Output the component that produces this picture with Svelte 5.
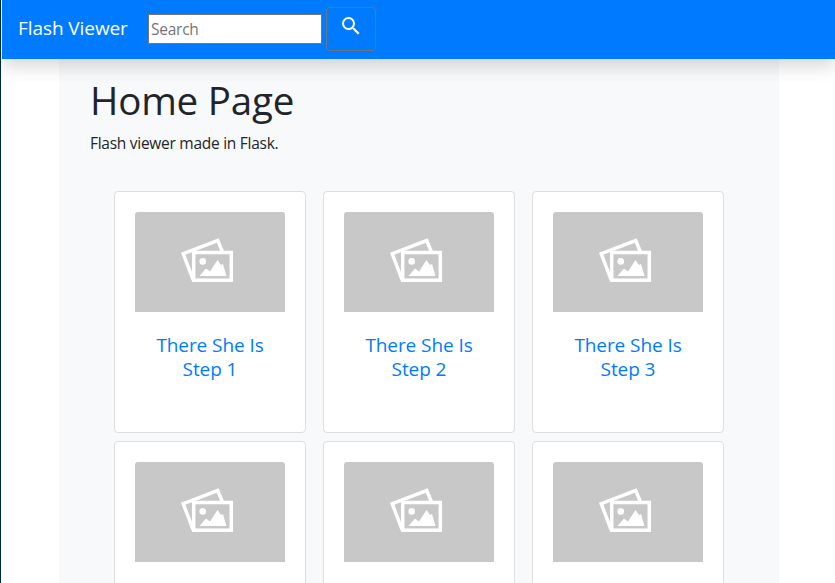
<script>
  const cards = [
    ['There She Is', 'Step 1'],
    ['There She Is', 'Step 2'],
    ['There She Is', 'Step 3'],
    [],
    [],
    [],
  ];
</script>

<div class="page">
  <nav>
    <a class="brand" href="#home">Flash Viewer</a>
    <form>
      <input type="text" placeholder="Search" aria-label="Search" />
      <button type="button" aria-label="Submit search">
        <svg width="24" height="24" viewBox="0 0 24 24" fill="#fff">
          <path d="M15.5 14h-.79l-.28-.27A6.47 6.47 0 0 0 16 9.5 6.5 6.5 0 1 0 9.5 16c1.61 0 3.09-.59 4.23-1.57l.27.28v.79l5 4.99L20.49 19l-4.99-5zm-6 0C7.01 14 5 11.99 5 9.5S7.01 5 9.5 5 14 7.01 14 9.5 11.99 14 9.5 14z" />
        </svg>
      </button>
    </form>
  </nav>
  <main>
    <h1>Home Page</h1>
    <p>Flash viewer made in Flask.</p>
    <div class="grid">
      {#each cards as [title, step]}
        <article>
          <svg class="thumb" width="150" height="100" viewBox="0 0 150 100">
            <rect width="150" height="100" fill="#c8c8c8" />
            <g fill="none" stroke="#fff" stroke-width="3.5">
              <path d="M87.5 40 L82.700 28.500 L48.200 41.700 L58.200 68" />
              <rect x="58.700" y="40.500" width="37.600" height="27.700" />
            </g>
            <circle cx="67.700" cy="49.400" r="3.300" fill="#fff" />
            <path d="M64.500 64 L71 56.500 L75 59.500 L82.500 48 L86 53 L88 52 L91.500 64z" fill="#fff" />
          </svg>
          {#if title}
            <h5><a href="#flash">{title}<br />{step}</a></h5>
          {/if}
        </article>
      {/each}
    </div>
  </main>
</div>

<style>
  :global(body) {
    overflow: hidden;
    background: #fff;
  }
  .page {
    box-sizing: border-box;
    height: 583px;
    overflow: hidden;
    border-left: 1px solid #002b3b;
    padding-left: 1px;
    font-family: "Open Sans", "Noto Sans", sans-serif;
    color: #212529;
  }
  nav {
    position: relative;
    z-index: 1;
    box-sizing: border-box;
    height: 59px;
    padding: 0 16px 1px;
    display: flex;
    align-items: center;
    background: #007bff;
    box-shadow: 0 8px 16px rgba(0, 0, 0, 0.15);
  }
  .brand {
    width: 130px;
    font-size: 19px;
    line-height: 30px;
    letter-spacing: -0.08px;
    white-space: nowrap;
    color: #fff;
    text-decoration: none;
    margin-top: -2px;
  }
  form {
    display: flex;
    align-items: center;
    gap: 4px;
  }
  input {
    box-sizing: border-box;
    width: 174px;
    height: 30px;
    padding: 1px 2px;
    border: 1px solid #767676;
    border-radius: 0;
    background: #fff;
    font: 15.5px "Open Sans", "Noto Sans", sans-serif;
    letter-spacing: -0.25px;
  }
  input::placeholder {
    color: #757575;
    opacity: 1;
  }
  button {
    box-sizing: border-box;
    width: 50px;
    height: 44px;
    padding: 6px 0 0;
    display: flex;
    justify-content: center;
    align-items: flex-start;
    border: 1px solid #6c757d;
    border-radius: 4px;
    background: transparent;
  }
  main {
    box-sizing: border-box;
    width: 720px;
    height: 524px;
    margin-left: 57px;
    padding: 17px 31px 0;
    background: #f8f9fa;
  }
  h1 {
    margin: 0 0 7px;
    font-size: 38.5px;
    line-height: 48px;
    font-weight: 400;
    letter-spacing: -0.2px;
  }
  p {
    margin: 0;
    font-size: 15.5px;
    line-height: 24px;
    letter-spacing: -0.27px;
  }
  .grid {
    display: grid;
    grid-template-columns: repeat(3, 192px);
    gap: 8px 17px;
    margin: 36px 0 0 24px;
  }
  article {
    box-sizing: border-box;
    height: 242px;
    padding: 20px;
    border: 1px solid #dfdfdf;
    border-radius: 4px;
    background: #fff;
    text-align: center;
  }
  .thumb {
    display: block;
    border-radius: 3px 3px 0 0;
  }
  h5 {
    margin: 21px 0 0;
    font-size: 19px;
    line-height: 24px;
    font-weight: 400;
    letter-spacing: -0.08px;
  }
  h5 a {
    color: #007bff;
    text-decoration: none;
  }
</style>
